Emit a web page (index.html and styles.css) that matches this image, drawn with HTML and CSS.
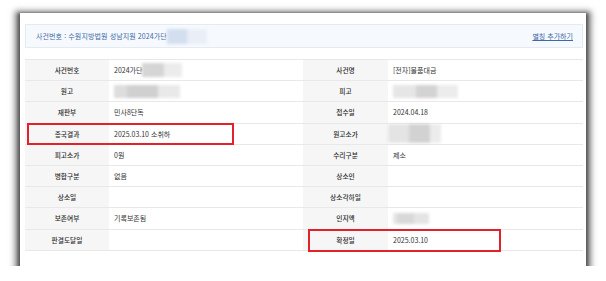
FILE: index.html
```html
<!DOCTYPE html>
<html lang="ko">
<head>
<meta charset="utf-8">
<link rel="stylesheet" href="styles.css">
</head>
<body>
<div class="page">
  <div class="card">
    <div class="case-head">
      <span class="case-title">사건번호 : 수원지방법원 성남지원 2024가단<span class="blur blur-head"></span></span>
      <a class="alias-link" href="#">별칭 추가하기</a>
    </div>
    <div class="detail">
      <div class="lbl">사건번호</div><div class="val">2024가단<span class="blur blur-case"></span></div>
      <div class="lbl">사건명</div><div class="val">[전자]물품대금</div>

      <div class="lbl">원고</div><div class="val"><span class="blur blur-plaintiff"></span></div>
      <div class="lbl">피고</div><div class="val"><span class="blur blur-defendant"></span></div>

      <div class="lbl">재판부</div><div class="val">민사8단독</div>
      <div class="lbl">접수일</div><div class="val">2024.04.18</div>

      <div class="lbl">종국결과</div><div class="val">2025.03.10 소취하</div>
      <div class="lbl">원고소가</div><div class="val"><span class="blur blur-amount"></span></div>

      <div class="lbl">피고소가</div><div class="val">0원</div>
      <div class="lbl">수리구분</div><div class="val">제소</div>

      <div class="lbl">병합구분</div><div class="val">없음</div>
      <div class="lbl">상소인</div><div class="val"></div>

      <div class="lbl">상소일</div><div class="val"></div>
      <div class="lbl">상소각하일</div><div class="val"></div>

      <div class="lbl">보존여부</div><div class="val">기록보존됨</div>
      <div class="lbl">인지액</div><div class="val"><span class="blur blur-stamp"></span></div>

      <div class="lbl">판결도달일</div><div class="val"></div>
      <div class="lbl">확정일</div><div class="val">2025.03.10</div>
    </div>
    <div class="mark mark-result"></div>
    <div class="mark mark-final"></div>
  </div>
</div>
</body>
</html>
```

FILE: styles.css
```css
html, body {
  margin: 0;
  padding: 0;
  background: #ffffff;
}
body {
  font-family: "Noto Sans CJK KR", "Noto Sans", sans-serif;
  color: #333333;
}
.page {
  padding: 13px 0 0 20px;
}
.card {
  position: relative;
  width: 566px;
  height: 253px;
  box-sizing: border-box;
  padding: 11px 3px 0 5px;
  background: #ffffff;
  box-shadow: 0 3px 6px 5px rgba(0, 0, 0, 0.5), 0 2px 3px 2px rgba(0, 0, 0, 0.35);
}
.case-head {
  height: 24px;
  box-sizing: border-box;
  border: 1px solid #e3eaf3;
  background: #f6f9fd;
  display: flex;
  align-items: center;
  justify-content: space-between;
  padding: 0 9px 0 10px;
}
.case-title {
  font-size: 7px;
  color: #3c6aa8;
  display: flex;
  align-items: center;
  letter-spacing: 0.1px;
}
.alias-link {
  font-size: 7px;
  color: #3c6aa8;
  text-decoration: underline;
}
.detail {
  margin-top: 11px;
  display: grid;
  grid-template-columns: 84px 194px 85px 195px;
  grid-auto-rows: 21.2px;
  border-top: 1px solid #e8e8e8;
}
.lbl, .val {
  box-sizing: border-box;
  border-bottom: 1px solid #e8e8e8;
  display: flex;
  align-items: center;
}
.lbl {
  font-size: 6.7px;
  font-weight: 500;
  background: #f6f6f6;
  justify-content: center;
  color: #2a2a2a;
}
.val {
  font-size: 7px;
  padding-left: 5px;
  color: #333333;
}
.blur {
  display: inline-block;
  filter: blur(1.5px);
}
.blur-head {
  width: 40px;
  height: 15px;
  background: linear-gradient(90deg, #d3deef 0 50%, #e9eef7 50% 100%);
}
.blur-case {
  width: 40px;
  height: 14px;
  background: linear-gradient(90deg, #d5d5d5 0 55%, #ececec 55% 100%);
}
.blur-plaintiff {
  width: 66px;
  height: 13px;
  background: linear-gradient(90deg, #dddddd 0 20%, #d0d0d0 20% 66%, #e9e9e9 66% 100%);
}
.blur-defendant {
  width: 65px;
  height: 13px;
  background: linear-gradient(90deg, #e6e6e6 0 35%, #d3d3d3 35% 67%, #ececec 67% 100%);
}
.blur-amount {
  width: 53px;
  height: 19px;
  margin-left: -5px;
  background: linear-gradient(90deg, #e4e4e4 0 40%, #d2d2d2 40% 80%, #ececec 80% 100%);
}
.blur-stamp {
  width: 36px;
  height: 11px;
  background: linear-gradient(90deg, #e6e6e6 0 10%, #d8d8d8 10% 58%, #e4e4e4 58% 100%);
}
.mark {
  position: absolute;
  border: 2px solid #e2212b;
  box-sizing: border-box;
}
.mark-result {
  left: 7px;
  top: 110px;
  width: 207px;
  height: 22px;
}
.mark-final {
  left: 288px;
  top: 216px;
  width: 193px;
  height: 23px;
}
```
